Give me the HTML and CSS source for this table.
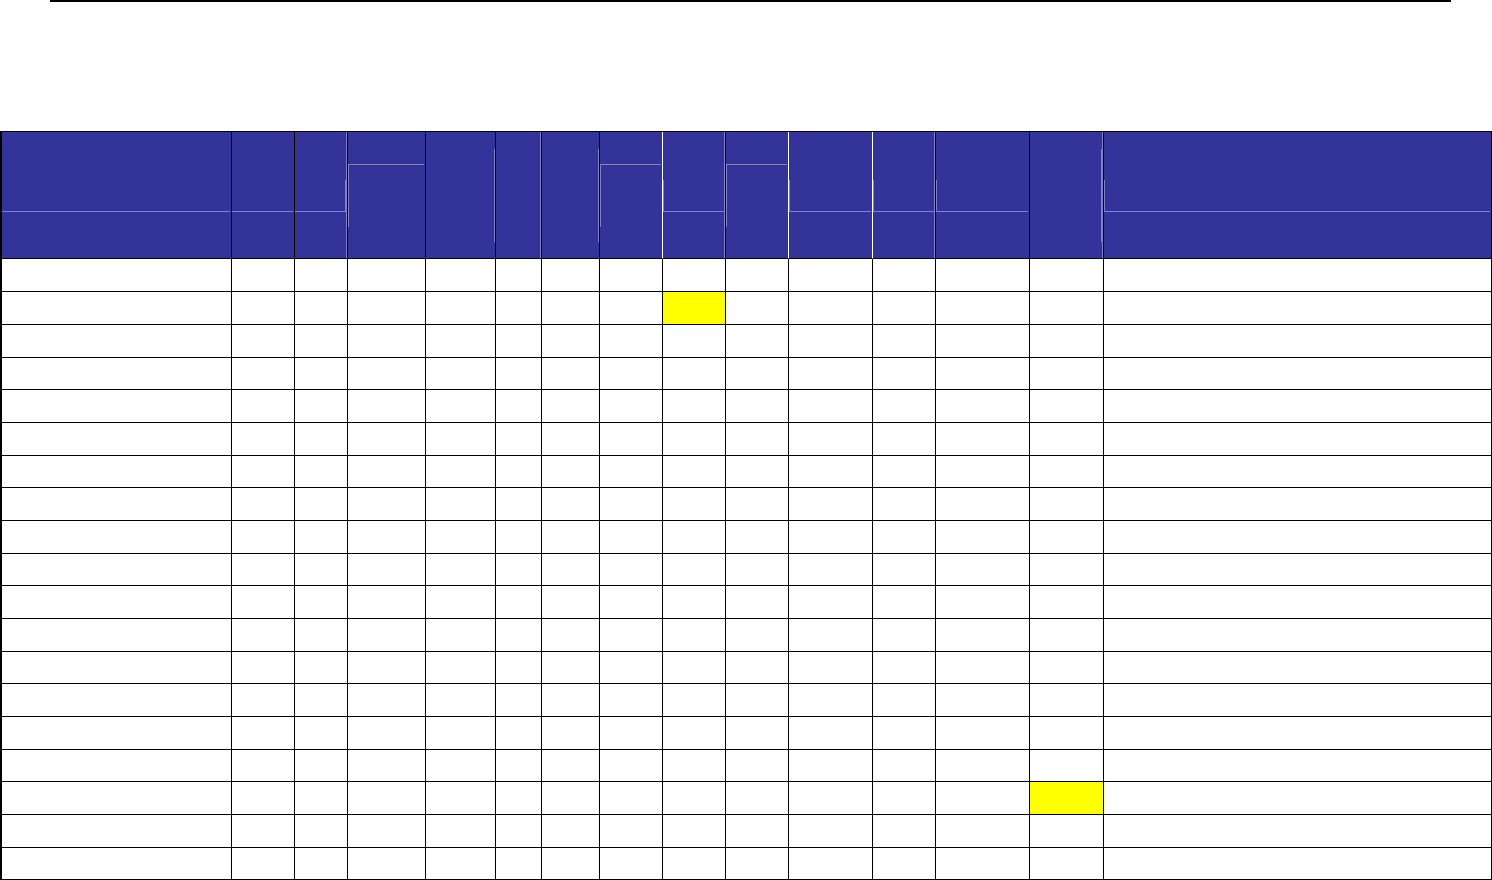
FILE: index.html
```html
<!DOCTYPE html>
<html lang="en">
<head>
<meta charset="utf-8">
<title>Table</title>
<link rel="stylesheet" href="styles.css">
</head>
<body>
<div class="rule"></div>
<table class="grid">
  <colgroup>
    <col class="c230"><col class="c63"><col class="c53"><col class="c78"><col class="c70">
    <col class="c46"><col class="c58"><col class="c63"><col class="c63"><col class="c63">
    <col class="c84"><col class="c63"><col class="c94"><col class="c74"><col class="c388">
  </colgroup>
  <thead>
    <tr>
      <th><div class="split"></div></th>
      <th><div class="split"></div></th>
      <th class="edge"><div class="split inset-r"><div class="stub right"></div></div></th>
      <th><div class="sub"></div></th>
      <th><div class="vbar"></div></th>
      <th class="edge"><div class="vbar"></div></th>
      <th><div class="vbar"></div></th>
      <th class="white"><div class="sub"></div></th>
      <th class="edge"><div class="split inset-r"><div class="stub"></div></div></th>
      <th class="white"><div class="sub"></div></th>
      <th class="white"><div class="split"><div class="stub"></div></div></th>
      <th class="edge"><div class="split inset-r"><div class="stub"></div></div></th>
      <th><div class="split"><div class="stub"></div></div></th>
      <th class="edge"><div class="vbar inset-r"></div></th>
      <th><div class="split"><div class="stub"></div></div></th>
    </tr>
  </thead>
  <tbody>
    <tr><td></td><td></td><td></td><td></td><td></td><td></td><td></td><td></td><td></td><td></td><td></td><td></td><td></td><td></td><td></td></tr>
    <tr><td></td><td></td><td></td><td></td><td></td><td></td><td></td><td></td><td class="mark"></td><td></td><td></td><td></td><td></td><td></td><td></td></tr>
    <tr><td></td><td></td><td></td><td></td><td></td><td></td><td></td><td></td><td></td><td></td><td></td><td></td><td></td><td></td><td></td></tr>
    <tr class="short"><td></td><td></td><td></td><td></td><td></td><td></td><td></td><td></td><td></td><td></td><td></td><td></td><td></td><td></td><td></td></tr>
    <tr><td></td><td></td><td></td><td></td><td></td><td></td><td></td><td></td><td></td><td></td><td></td><td></td><td></td><td></td><td></td></tr>
    <tr><td></td><td></td><td></td><td></td><td></td><td></td><td></td><td></td><td></td><td></td><td></td><td></td><td></td><td></td><td></td></tr>
    <tr class="short"><td></td><td></td><td></td><td></td><td></td><td></td><td></td><td></td><td></td><td></td><td></td><td></td><td></td><td></td><td></td></tr>
    <tr><td></td><td></td><td></td><td></td><td></td><td></td><td></td><td></td><td></td><td></td><td></td><td></td><td></td><td></td><td></td></tr>
    <tr><td></td><td></td><td></td><td></td><td></td><td></td><td></td><td></td><td></td><td></td><td></td><td></td><td></td><td></td><td></td></tr>
    <tr class="short"><td></td><td></td><td></td><td></td><td></td><td></td><td></td><td></td><td></td><td></td><td></td><td></td><td></td><td></td><td></td></tr>
    <tr><td></td><td></td><td></td><td></td><td></td><td></td><td></td><td></td><td></td><td></td><td></td><td></td><td></td><td></td><td></td></tr>
    <tr><td></td><td></td><td></td><td></td><td></td><td></td><td></td><td></td><td></td><td></td><td></td><td></td><td></td><td></td><td></td></tr>
    <tr class="short"><td></td><td></td><td></td><td></td><td></td><td></td><td></td><td></td><td></td><td></td><td></td><td></td><td></td><td></td><td></td></tr>
    <tr><td></td><td></td><td></td><td></td><td></td><td></td><td></td><td></td><td></td><td></td><td></td><td></td><td></td><td></td><td></td></tr>
    <tr><td></td><td></td><td></td><td></td><td></td><td></td><td></td><td></td><td></td><td></td><td></td><td></td><td></td><td></td><td></td></tr>
    <tr class="short"><td></td><td></td><td></td><td></td><td></td><td></td><td></td><td></td><td></td><td></td><td></td><td></td><td></td><td></td><td></td></tr>
    <tr><td></td><td></td><td></td><td></td><td></td><td></td><td></td><td></td><td></td><td></td><td></td><td></td><td></td><td class="mark"></td><td></td></tr>
    <tr><td></td><td></td><td></td><td></td><td></td><td></td><td></td><td></td><td></td><td></td><td></td><td></td><td></td><td></td><td></td></tr>
    <tr class="short"><td></td><td></td><td></td><td></td><td></td><td></td><td></td><td></td><td></td><td></td><td></td><td></td><td></td><td></td><td></td></tr>
  </tbody>
</table>
</body>
</html>
```
FILE: styles.css
```css
* { box-sizing: border-box; }
html, body {
  margin: 0;
  padding: 0;
  background: #ffffff;
  font-family: "Liberation Sans", Arial, sans-serif;
  overflow: hidden;
}
.rule {
  margin-left: 50px;
  width: 1401px;
  height: 2px;
  background: #000000;
}
.grid {
  margin-top: 129px;
  width: 1492px;
  table-layout: fixed;
  border-collapse: separate;
  border-spacing: 0;
  border-left: 2px solid #000000;
  border-top: 1px solid #000000;
}
.c230 { width: 230px; }
.c63 { width: 63px; }
.c53 { width: 53px; }
.c78 { width: 78px; }
.c70 { width: 70px; }
.c46 { width: 46px; }
.c58 { width: 58px; }
.c84 { width: 84px; }
.c94 { width: 94px; }
.c74 { width: 74px; }
.c388 { width: 388px; }

.grid th, .grid td {
  padding: 0;
  border-right: 1px solid #000000;
  border-bottom: 1px solid #000000;
}
.grid thead tr { height: 127px; }
.grid th {
  background: #333399;
  vertical-align: top;
  height: 127px;
}
.grid th.white { border-right-color: #ffffff; }
.grid th.edge { box-shadow: inset -1px 0 0 #8080c4; }

.split {
  height: 80px;
  border-bottom: 1px solid #8080c4;
  margin-right: 1px;
  display: flex;
  flex-direction: column;
  justify-content: flex-end;
}
.split.inset-r { margin-right: 1px; }
.stub {
  height: 31px;
  width: 100%;
  border-left: 1px solid #8080c4;
}
.stub.right {
  border-left: 0;
  border-right: 1px solid #8080c4;
}
.sub {
  margin-top: 32px;
  height: 63px;
  margin-right: 1px;
  border-top: 1px solid #8080c4;
  border-left: 1px solid #8080c4;
}
.vbar {
  margin-top: 17px;
  height: 93px;
  border-right: 1px solid #8080c4;
}
.vbar.inset-r { margin-right: 1px; }

.grid tbody tr { height: 33px; }
.grid tbody tr.short { height: 32px; }
.grid td { background: #ffffff; }
.grid td.mark { background: #ffff00; }
```
